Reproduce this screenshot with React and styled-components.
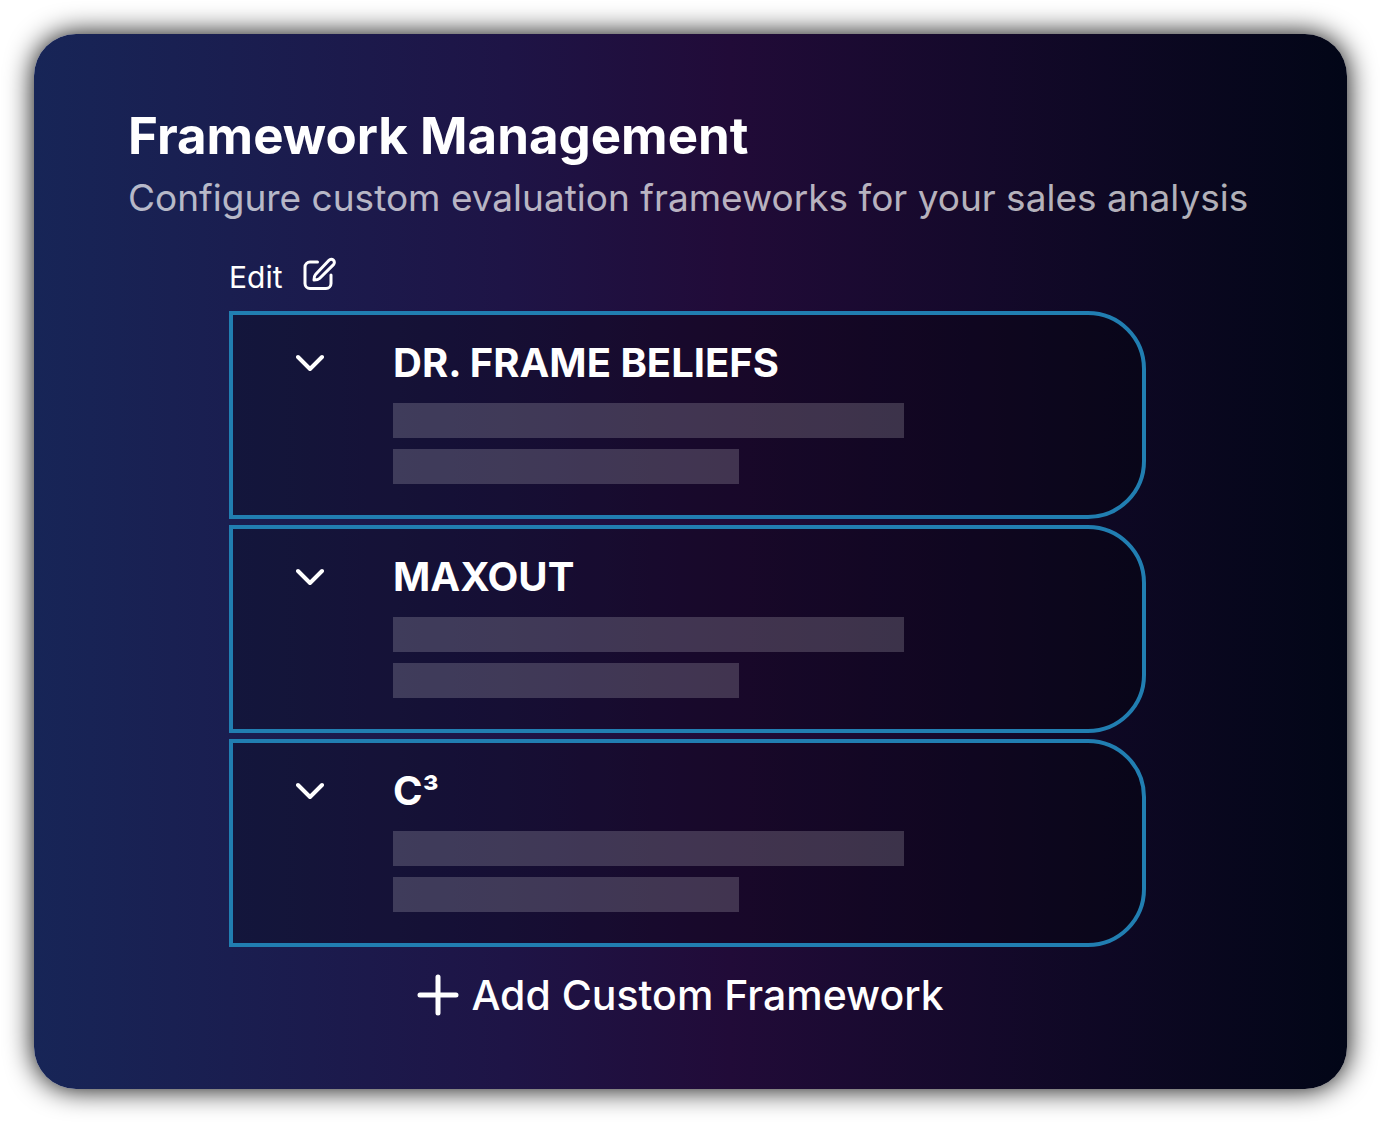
import React from 'react';
import styled, { createGlobalStyle } from 'styled-components';

const frameworks = [
	{ key: 'beliefs', name: 'DR. FRAME BELIEFS' },
	{ key: 'maxout', name: 'MAXOUT' },
	{ key: 'c3', name: 'C', exponent: '³' },
];

const EditIcon = () => (
	<svg width='34' height='34' viewBox='0 0 34 34' fill='none' aria-hidden='true'>
		<path d='M15.500 5H8a5 5 0 0 0-5 5v16.500a5 5 0 0 0 5 5h16a5 5 0 0 0 5-5V18' />
		<path d='M27 3.300a3.100 3.100 0 0 1 4.500 4.300L17.500 21.500c-1.500 1.500-3 1.500-5.500 1.500 0-2.500 0-4 1.500-5.500z' />
	</svg>
);

const ChevronIcon = () => (
	<svg width='28' height='18' viewBox='0 0 28 18' fill='none' aria-hidden='true'>
		<path d='M2 3l12 12L26 3' />
	</svg>
);

const PlusIcon = () => (
	<svg width='42' height='42' viewBox='0 0 42 42' fill='none' aria-hidden='true'>
		<path d='M21 3v36M3 21h36' />
	</svg>
);

const App = () => (
	<>
		<GlobalStyle />
		<Page>
			<Panel>
				<Title>Framework Management</Title>
				<Subtitle>Configure custom evaluation frameworks for your sales analysis</Subtitle>

				<Content>
					<EditButton type='button'>
						Edit
						<EditIcon />
					</EditButton>

					<List>
						{
							frameworks.map((item) => (
								<Item key={item.key}>
									<Toggle type='button' aria-label={item.name}>
										<ChevronIcon />
									</Toggle>
									<Details>
										<Name>
											{item.name}
											{item.exponent && <Exponent>{item.exponent}</Exponent>}
										</Name>
										<Placeholder $size='long' />
										<Placeholder />
									</Details>
								</Item>
							))
						}
					</List>

					<AddButton type='button'>
						<PlusIcon />
						Add Custom Framework
					</AddButton>
				</Content>
			</Panel>
		</Page>
	</>
);

const GlobalStyle = createGlobalStyle`
* {
	box-sizing:border-box;
}

body {
	margin:0;
	background:white;
	color:white;
	font-family:Inter, 'Liberation Sans', sans-serif;
}

button {
	padding:0;
	border:0;
	background:none;
	color:inherit;
	font:inherit;
	cursor:pointer;
}
`;

const Page = styled.main`
padding:34px;
`;

const Panel = styled.section`
padding:72px 94px 69px;
border-radius:42px;
background:linear-gradient(90deg, #172557 0%, #1e1446 36%, #210b38 53%, #020617 100%);
box-shadow:0 0 28px black;
`;

const Title = styled.h1`
margin:0;
font-size:51px;
line-height:60px;
font-weight:700;
`;

const Subtitle = styled.p`
margin:0;
font-size:37px;
line-height:64px;
color:rgba(255, 255, 255, 0.7);
`;

const Content = styled.div`
padding:27px 107px 0 101px;
`;

const EditButton = styled.button`
display:flex;
align-items:flex-start;
gap:20px;
font-size:30px;
line-height:40px;

svg {
	stroke:currentColor;
	stroke-width:3;
	stroke-linecap:round;
	stroke-linejoin:round;
}
`;

const List = styled.ul`
display:flex;
flex-direction:column;
gap:6px;
margin:0;
padding:14px 0 0;
list-style:none;
`;

const Item = styled.li`
display:flex;
padding:28px 58px 31px 63px;
border:4px solid #217eb1;
border-radius:0 58px 58px 0;
background:rgba(0, 0, 0, 0.25);
`;

const Toggle = styled.button`
display:flex;
align-items:center;
height:40px;
margin-right:69px;

svg {
	stroke:currentColor;
	stroke-width:4;
	stroke-linecap:round;
	stroke-linejoin:round;
}
`;

const Details = styled.div`
flex:1;
display:flex;
flex-direction:column;
gap:11px;
`;

const Name = styled.h2`
margin:0 0 9px;
font-size:40px;
line-height:40px;
font-weight:700;
`;

const Exponent = styled.span`
font-size:35px;
line-height:1;
`;

const Placeholder = styled.div`
width:${({ $size }) => ($size === 'long' ? '74%' : '50%')};
height:35px;
background:rgba(255, 255, 255, 0.18);
`;

const AddButton = styled.button`
display:flex;
align-items:center;
gap:12px;
margin:23px auto 0;
padding-right:14px;
font-size:41px;
line-height:50px;
font-weight:500;

svg {
	stroke:currentColor;
	stroke-width:5;
	stroke-linecap:round;
}
`;

export default App;
